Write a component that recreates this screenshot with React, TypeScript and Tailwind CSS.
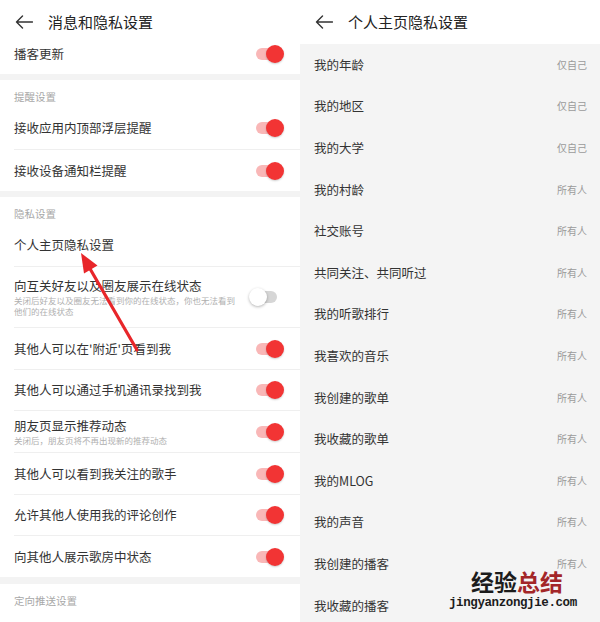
import React from "react";

const FONT = { fontFamily: '"Noto Sans CJK SC", "Noto Sans", sans-serif' };

function BackArrow() {
  return (
    <svg width="18" height="14" viewBox="0 0 18 14" fill="none">
      <path d="M17.5 7H1.5M7.5 1L1.5 7L7.5 13" stroke="#333" strokeWidth="1.4" strokeLinecap="round" strokeLinejoin="round" />
    </svg>
  );
}

function Toggle({ on }: { on: boolean }) {
  return (
    <div className="relative w-[35px] h-[18px] shrink-0">
      <div
        className={
          "absolute left-[7px] right-[7px] top-[3px] h-[12px] rounded-full " +
          (on ? "bg-[#f9b7b7]" : "bg-[#d6d6d6]")
        }
      />
      {on ? (
        <div className="absolute right-0 top-0 w-[18px] h-[18px] rounded-full bg-[#f23434] shadow-[0_1px_2px_rgba(0,0,0,0.2)]" />
      ) : (
        <div className="absolute left-0 top-0 w-[18px] h-[18px] rounded-full bg-white shadow-[0_1px_3px_rgba(0,0,0,0.3)]" />
      )}
    </div>
  );
}

type RowProps = {
  title: string;
  sub?: React.ReactNode;
  toggle?: boolean | null;
  h: string;
  divider?: boolean;
};

function Row({ title, sub, toggle, h, divider }: RowProps) {
  return (
    <div className={"bg-white pl-[14px] " + h}>
      <div className={"h-full flex items-center pr-[16px] " + (divider ? "border-t border-[#efefef]" : "")}>
        <div className="flex-1 flex flex-col">
          <div className="text-[12.5px] leading-[16px] text-[#333]">{title}</div>
          {sub ? <div className="text-[8.5px] leading-[11px] text-[#b0b0b0] mt-[1px]">{sub}</div> : null}
        </div>
        {toggle === true || toggle === false ? <Toggle on={toggle} /> : null}
      </div>
    </div>
  );
}

function SectionHeader({ title, h }: { title: string; h: string }) {
  return (
    <div className={"bg-white pl-[14px] pt-[11px] " + h}>
      <div className="text-[10.5px] leading-[12px] text-[#a8a8a8]">{title}</div>
    </div>
  );
}

const rightRows: [string, string][] = [
  ["我的年龄", "仅自己"],
  ["我的地区", "仅自己"],
  ["我的大学", "仅自己"],
  ["我的村龄", "所有人"],
  ["社交账号", "所有人"],
  ["共同关注、共同听过", "所有人"],
  ["我的听歌排行", "所有人"],
  ["我喜欢的音乐", "所有人"],
  ["我创建的歌单", "所有人"],
  ["我收藏的歌单", "所有人"],
  ["我的MLOG", "所有人"],
  ["我的声音", "所有人"],
  ["我创建的播客", "所有人"],
  ["我收藏的播客", ""],
];

export default function App() {
  return (
    <div className="relative w-[600px] h-[622px] overflow-hidden flex bg-white" style={FONT}>
      {/* Left panel */}
      <div className="w-[300px] h-full flex flex-col bg-[#f3f3f3] overflow-hidden">
        <div className="h-[34px] shrink-0 bg-white flex items-start pt-[12px] pl-[15px]">
          <div className="h-[20px] flex items-center">
            <BackArrow />
          </div>
          <div className="ml-[15px] text-[15px] leading-[20px] text-[#222]">消息和隐私设置</div>
        </div>
        <div className="shrink-0">
          <Row title="播客更新" toggle={true} h="h-[40px]" />
        </div>
        <div className="h-[6px] shrink-0" />
        <div className="shrink-0">
          <SectionHeader title="提醒设置" h="h-[27px]" />
          <Row title="接收应用内顶部浮层提醒" toggle={true} h="h-[42px]" />
          <Row title="接收设备通知栏提醒" toggle={true} h="h-[42px]" divider />
        </div>
        <div className="h-[6px] shrink-0" />
        <div className="shrink-0">
          <SectionHeader title="隐私设置" h="h-[27px]" />
          <Row title="个人主页隐私设置" h="h-[42px]" />
          <Row
            title="向互关好友以及圈友展示在线状态"
            sub={
              <>
                关闭后好友以及圈友无法看到你的在线状态，你也无法看到
                <br />
                他们的在线状态
              </>
            }
            toggle={false}
            h="h-[61px]"
            divider
          />
          <Row title="其他人可以在'附近'页看到我" toggle={true} h="h-[42px]" divider />
          <Row title="其他人可以通过手机通讯录找到我" toggle={true} h="h-[41px]" divider />
          <Row title="朋友页显示推荐动态" sub="关闭后，朋友页将不再出现新的推荐动态" toggle={true} h="h-[42px]" divider />
          <Row title="其他人可以看到我关注的歌手" toggle={true} h="h-[42px]" divider />
          <Row title="允许其他人使用我的评论创作" toggle={true} h="h-[41px]" divider />
          <Row title="向其他人展示歌房中状态" toggle={true} h="h-[42px]" divider />
        </div>
        <div className="h-[7px] shrink-0" />
        <div className="shrink-0">
          <SectionHeader title="定向推送设置" h="h-[27px]" />
          <div className="bg-white pl-[14px] h-[42px] pt-[9px]">
            <div className="text-[12.5px] leading-[16px] text-[#333]">个性化推荐</div>
          </div>
        </div>
      </div>

      {/* Right panel */}
      <div className="relative w-[300px] h-full flex flex-col bg-[#f4f4f4] overflow-hidden">
        <div className="h-[44px] shrink-0 bg-white flex items-center pl-[15px]">
          <BackArrow />
          <div className="ml-[15px] text-[15px] leading-[20px] text-[#222]">个人主页隐私设置</div>
        </div>
        <div className="flex flex-col">
          {rightRows.map(([t, v]) => (
            <div key={t} className="h-[41.6px] shrink-0 flex items-center pl-[14px] pr-[13px]">
              <div className="flex-1 text-[12.5px] leading-[16px] text-[#333]">{t}</div>
              {v ? <div className="text-[10px] leading-[12px] text-[#9a9a9a]">{v}</div> : null}
            </div>
          ))}
        </div>

        {/* Watermark */}
        <div className="absolute left-[149px] top-[568px] w-[140px] h-[50px] flex flex-col items-start">
          <div className="ml-[22px] flex font-bold text-[23px] leading-[27px]">
            <span className="text-[#1c1c1c]">经验</span>
            <span className="text-[#a32628]">总结</span>
          </div>
          <div
            className="text-[12.5px] leading-[16px] font-bold text-[#1c1c1c] tracking-[-0.4px]"
            style={{ fontFamily: '"Liberation Mono", "DejaVu Sans Mono", monospace' }}
          >
            jingyanzongjie.com
          </div>
        </div>
      </div>

      {/* Red annotation arrow */}
      <svg className="absolute left-0 top-0 pointer-events-none" width="600" height="622" viewBox="0 0 600 622">
        <line x1="137" y1="350" x2="89" y2="267" stroke="#e8262a" strokeWidth="3.2" strokeLinecap="round" />
        <polygon points="81,253 97.5,265.5 84,273.5" fill="#e8262a" />
      </svg>
    </div>
  );
}
